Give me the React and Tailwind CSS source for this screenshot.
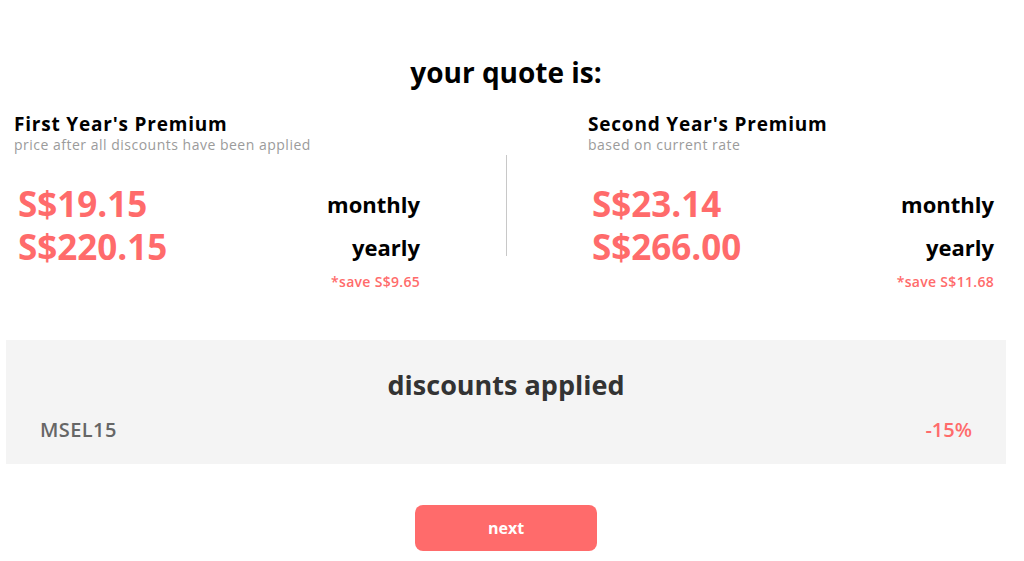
import React from "react";

const coral = "text-[#ff6b6b]";

const PremiumColumn = ({ title, subtitle, monthly, yearly, save }) => (
  <div className="w-[406px]">
    <h3 className="text-[19px] leading-[24px] font-bold tracking-[0.8px] text-black m-0">
      {title}
    </h3>
    <p className="text-[14px] leading-[18px] text-[#9b9b9b] tracking-[0.5px] m-0">
      {subtitle}
    </p>
    <div className="mt-[28px] pl-[4px]">
      <div className="flex items-center justify-between h-[43px]">
        <span className={`text-[35px] font-bold ${coral} leading-none`}>{monthly}</span>
        <span className="text-[22px] font-bold text-black leading-none">monthly</span>
      </div>
      <div className="flex items-center justify-between h-[43px]">
        <span className={`text-[35px] font-bold ${coral} leading-none`}>{yearly}</span>
        <span className="text-[22px] font-bold text-black leading-none">yearly</span>
      </div>
      <div className={`text-right text-[14px] font-semibold tracking-[0.3px] ${coral} mt-[3px]`}>
        {save}
      </div>
    </div>
  </div>
);

export default function App() {
  return (
    <div className="w-[1012px] h-[561px] bg-white font-['Open_Sans','Liberation_Sans',sans-serif] overflow-hidden">
      <h1 className="text-center text-[28px] leading-[36px] font-bold text-black pt-[54px] m-0">
        your quote is:
      </h1>

      <div className="flex mt-[22px] pl-[14px]">
        <PremiumColumn
          title="First Year's Premium"
          subtitle="price after all discounts have been applied"
          monthly="S$19.15"
          yearly="S$220.15"
          save="*save S$9.65"
        />
        <div className="w-[168px] flex justify-center pt-[43px]">
          <div className="w-px h-[101px] bg-[#c8c8c8] ml-[4px]" />
        </div>
        <PremiumColumn
          title="Second Year's Premium"
          subtitle="based on current rate"
          monthly="S$23.14"
          yearly="S$266.00"
          save="*save S$11.68"
        />
      </div>

      <div className="mx-[6px] mt-[48px] h-[124px] bg-[#f4f4f4] px-[34px] pt-[28px]">
        <h2 className="text-center text-[27px] leading-[34px] font-bold text-[#333] m-0">
          discounts applied
        </h2>
        <div className="flex justify-between items-center mt-[15px] text-[20px] leading-[26px]">
          <span className="text-[#666] font-semibold tracking-[0.4px]">MSEL15</span>
          <span className={`${coral} font-semibold`}>-15%</span>
        </div>
      </div>

      <div className="flex justify-center mt-[41px]">
        <button className="w-[182px] h-[46px] rounded-[8px] bg-[#ff6b6b] text-white text-[16px] font-bold border-none">
          next
        </button>
      </div>
    </div>
  );
}
